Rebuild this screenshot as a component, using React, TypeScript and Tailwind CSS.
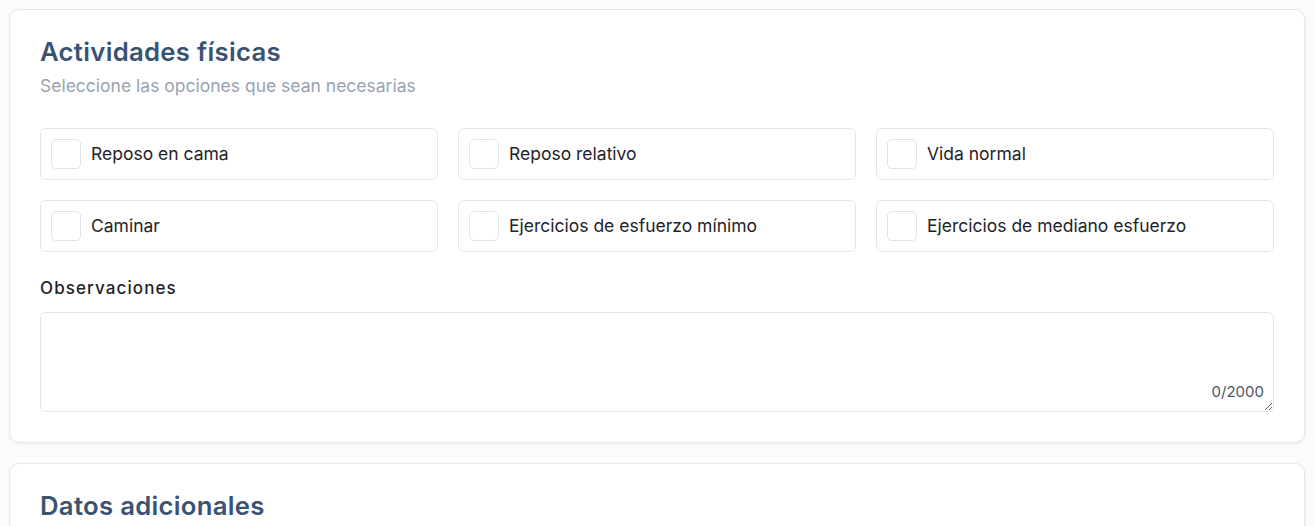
const options = [
  'Reposo en cama',
  'Reposo relativo',
  'Vida normal',
  'Caminar',
  'Ejercicios de esfuerzo mínimo',
  'Ejercicios de mediano esfuerzo',
];

function CheckOption({ label }: { label: string }) {
  return (
    <label className="flex h-[52px] items-center gap-[10px] rounded-[6px] border border-[#e3e6ea] bg-white px-[10px]">
      <span className="h-[30px] w-[30px] shrink-0 rounded-[5px] border border-[#dfe2e6] bg-white" />
      <span className="text-[17.5px] leading-[24px] text-[#1f2328]">{label}</span>
    </label>
  );
}

export default function App() {
  return (
    <div
      className="flex min-h-screen flex-col gap-[20px] bg-[#fafbfa] pl-[9px] pr-[10px] pt-[9px]"
      style={{ fontFamily: 'Inter, "Noto Sans", sans-serif' }}
    >
      <section className="rounded-[10px] border border-[#e5e7ea] bg-white px-[30px] pb-[30px] pt-[26px] shadow-[0_1px_3px_rgba(0,0,0,0.06)]">
        <h2 className="text-[25.7px] font-semibold leading-[32px] tracking-[0.3px] text-[#3a5373]">
          Actividades físicas
        </h2>
        <p className="mt-[6px] text-[17.5px] leading-[24px] text-[#98a3b0]">
          Seleccione las opciones que sean necesarias
        </p>

        <div className="mt-[30px] grid grid-cols-3 gap-[20px]">
          {options.map((o) => (
            <CheckOption key={o} label={o} />
          ))}
        </div>

        <div className="mt-[24px] text-[17px] font-medium leading-[24px] tracking-[1.1px] text-[#1f2328]">
          Observaciones
        </div>
        <div className="relative mt-[12px]">
          <textarea className="block h-[100px] w-full resize-y rounded-[6px] border border-[#e3e6ea] bg-white px-[12px] py-[10px] text-[16px] outline-none" />
          <span className="pointer-events-none absolute bottom-[10px] right-[10px] text-[15px] leading-[20px] text-[#4b5563]">
            0/2000
          </span>
        </div>
      </section>

      <section className="min-h-[120px] rounded-[10px] border border-[#e5e7ea] bg-white px-[30px] pb-[30px] pt-[26px] shadow-[0_1px_3px_rgba(0,0,0,0.06)]">
        <h2 className="text-[25.7px] font-semibold leading-[32px] tracking-[0.3px] text-[#3a5373]">
          Datos adicionales
        </h2>
      </section>
    </div>
  );
}
